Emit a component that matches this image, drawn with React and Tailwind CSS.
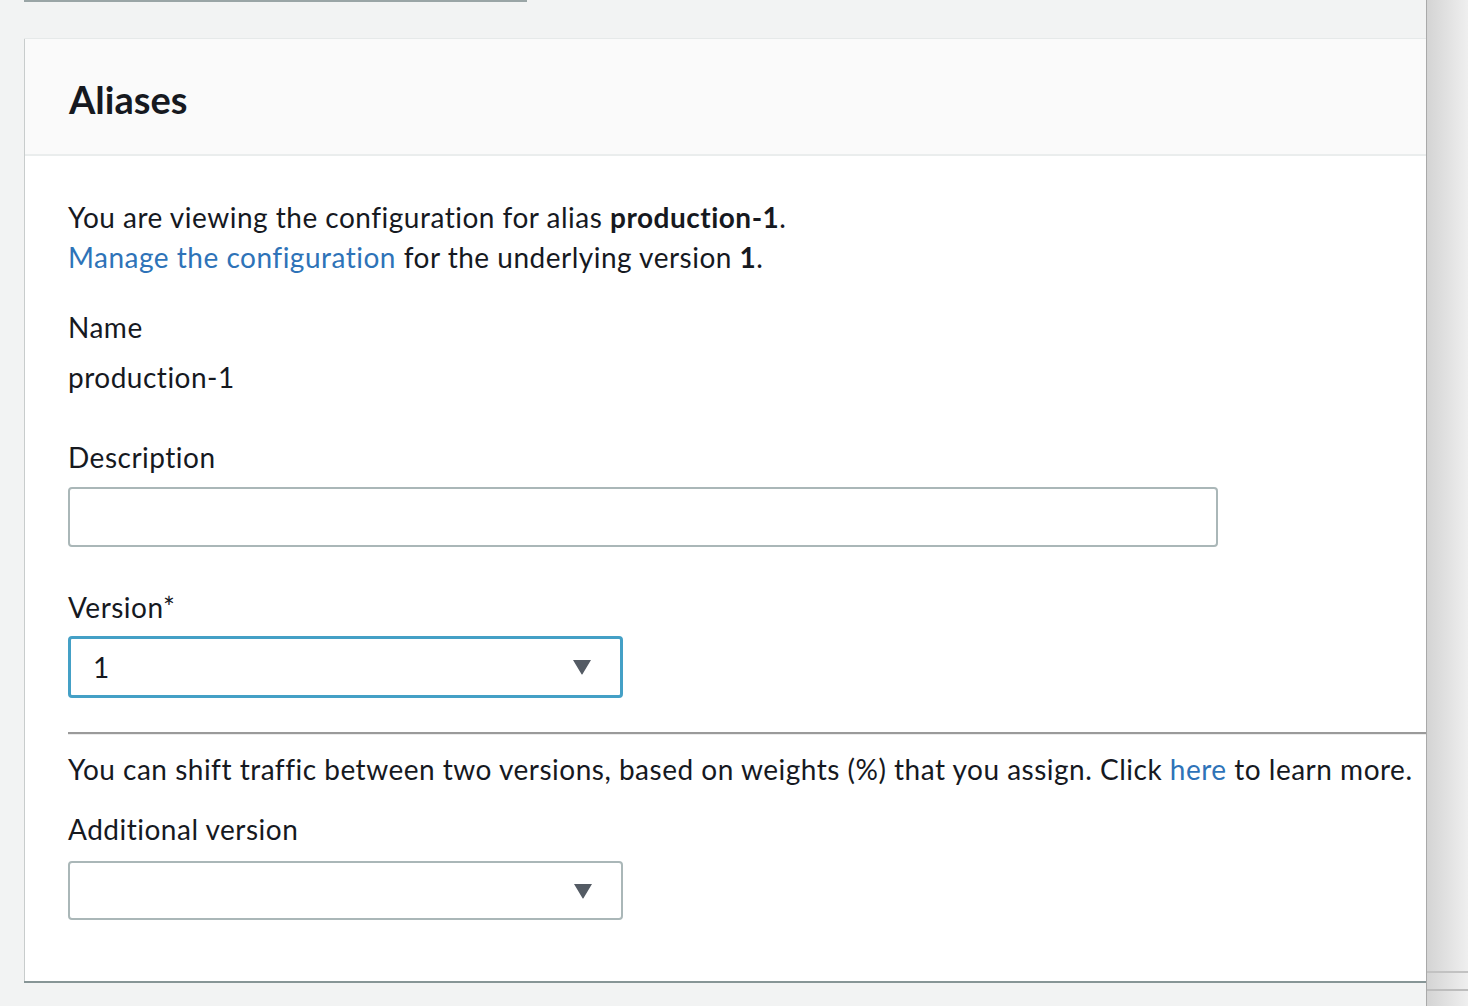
import React from 'react'

const font = { fontFamily: 'Lato, "Open Sans", sans-serif' }

function Caret() {
  return (
    <svg width="20" height="16" viewBox="0 0 20 16" className="shrink-0">
      <path d="M1 1 H19 L10.6 15 Q10 16 9.4 15 Z" fill="#545b64" />
    </svg>
  )
}

function Select({ value, focused }) {
  return (
    <div
      className={`w-[555px] flex items-center justify-between rounded-[4px] bg-white pl-[22px] pr-[28px] ${
        focused ? 'h-[62px] border-[3px] border-[#44a0c6]' : 'h-[59px] border-2 border-[#aab7b8]'
      }`}
    >
      <span className="text-[28px] text-[#16191f]">{value}</span>
      <Caret />
    </div>
  )
}

export default function App() {
  return (
    <div className="w-[1468px] h-[1006px] overflow-hidden bg-[#f2f3f3] flex" style={font}>
      <div className="flex-1 flex flex-col pl-[24px]">
        <div className="w-[503px] h-[2px] bg-[#9aa5a6]" />
        <div className="mt-[36px] h-[1px] bg-[#e6e9e9]" />
        <div className="bg-white border-l border-[#c8cccc] shadow-[0_2px_0_#879596]">
          <div className="h-[117px] bg-[#fafafa] border-b-2 border-[#eaeded] pl-[44px] flex items-end pb-[36px]">
            <h2 className="text-[38px] font-bold leading-none text-[#16191f]">Aliases</h2>
          </div>

          <div className="pl-[43px] pt-[41px] pb-[61px] text-[28px] leading-[40px] tracking-[0.5px] text-[#16191f]">
            <p>
              You are viewing the configuration for alias <b>production-1</b>.
            </p>
            <p>
              <span className="text-[#2e73b8]">Manage the configuration</span> for the underlying version <b>1</b>.
            </p>

            <p className="mt-[30px]">Name</p>
            <p className="mt-[10px]">production-1</p>

            <p className="mt-[40px]">Description</p>
            <div className="mt-[10px] w-[1150px] h-[60px] rounded-[4px] border-2 border-[#aab7b8] bg-white" />

            <p className="mt-[40px]">Version*</p>
            <div className="mt-[9px]">
              <Select value="1" focused />
            </div>

            <div className="mt-[34px] border-t-2 border-[#9a9a9a] border-b border-b-[#ececec]" />

            <p className="mt-[14px]">
              You can shift traffic between two versions, based on weights (%) that you assign. Click{' '}
              <span className="text-[#2e73b8]">here</span> to learn more.
            </p>

            <p className="mt-[20px]">Additional version</p>
            <div className="mt-[12px]">
              <Select value="" />
            </div>
          </div>
        </div>
      </div>

      <div className="w-[42px] h-full border-l border-[#a9a9a9] bg-gradient-to-r from-[#d4d4d4] to-[#efefef] flex flex-col">
        <div className="mt-[971px] h-[2px] bg-[#c2c2c2]" />
        <div className="mt-[16px] h-[2px] bg-[#bdbdbd]" />
      </div>
    </div>
  )
}
